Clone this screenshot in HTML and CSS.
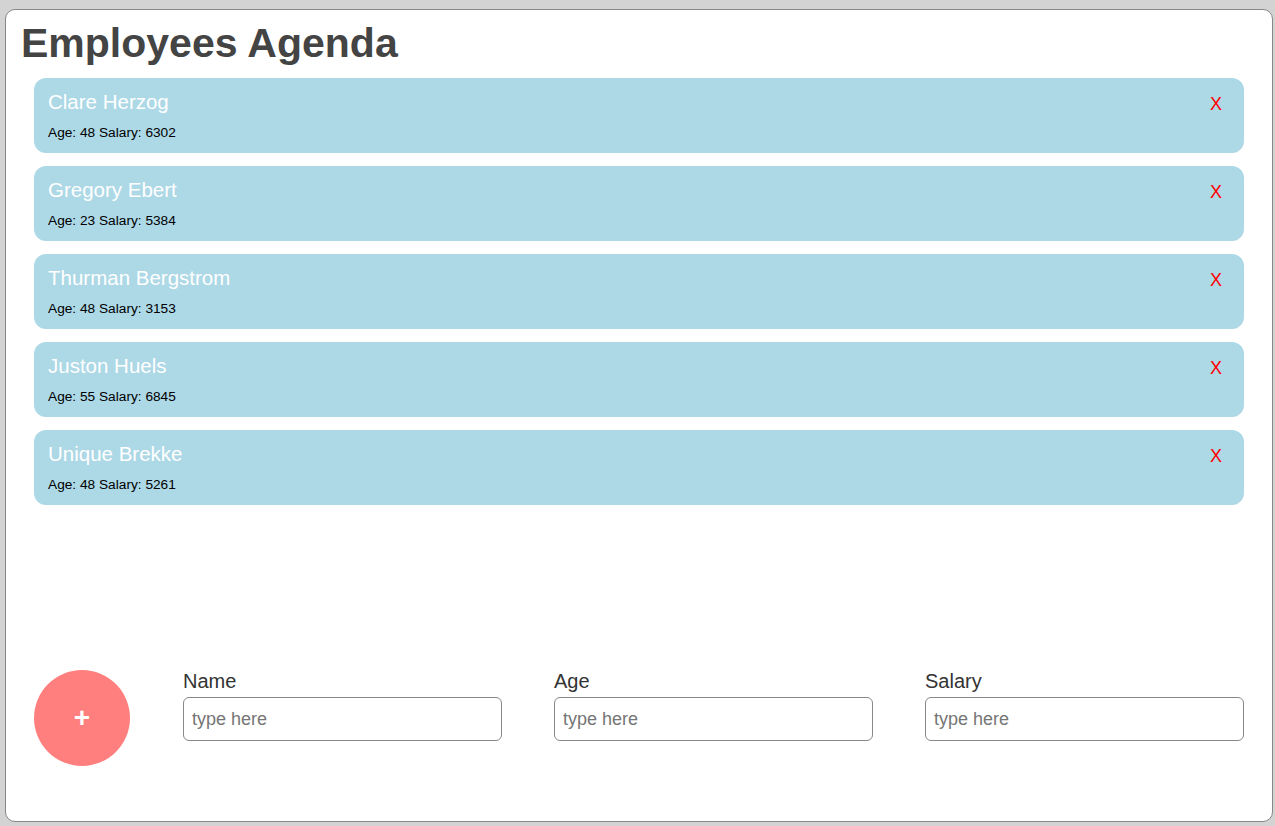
FILE: index.html
```html
<!DOCTYPE html>
<html lang="en">
<head>
<meta charset="utf-8">
<title>Employees Agenda</title>
<link rel="stylesheet" href="styles.css">
</head>
<body>
<div class="panel">
  <h1 class="title">Employees Agenda</h1>
  <ul class="list">
    <li class="card">
      <div class="info"><div class="name">Clare Herzog</div><div class="meta">Age: 48 Salary: 6302</div></div>
      <span class="remove">X</span>
    </li>
    <li class="card">
      <div class="info"><div class="name">Gregory Ebert</div><div class="meta">Age: 23 Salary: 5384</div></div>
      <span class="remove">X</span>
    </li>
    <li class="card">
      <div class="info"><div class="name">Thurman Bergstrom</div><div class="meta">Age: 48 Salary: 3153</div></div>
      <span class="remove">X</span>
    </li>
    <li class="card">
      <div class="info"><div class="name">Juston Huels</div><div class="meta">Age: 55 Salary: 6845</div></div>
      <span class="remove">X</span>
    </li>
    <li class="card">
      <div class="info"><div class="name">Unique Brekke</div><div class="meta">Age: 48 Salary: 5261</div></div>
      <span class="remove">X</span>
    </li>
  </ul>
  <form class="form">
    <button type="button" class="add">+</button>
    <label class="field"><span class="label">Name</span><input class="input" type="text" placeholder="type here"></label>
    <label class="field"><span class="label">Age</span><input class="input" type="text" placeholder="type here"></label>
    <label class="field"><span class="label">Salary</span><input class="input" type="text" placeholder="type here"></label>
  </form>
</div>
</body>
</html>
```
FILE: styles.css
```css
html, body {
  height: 100%;
}
body {
  margin: 0;
  padding: 9px 2px 4px 5px;
  box-sizing: border-box;
  background: #d3d3d3;
  font-family: "Liberation Sans", Arial, sans-serif;
}
.panel {
  height: 100%;
  box-sizing: border-box;
  background: #fff;
  border: 1px solid #888;
  border-radius: 10px;
  display: flex;
  flex-direction: column;
  padding: 10px 0 55px 0;
}
.title {
  margin: 0 0 12px 15px;
  font-size: 41px;
  line-height: 46px;
  font-weight: bold;
  color: #444;
}
.list {
  list-style: none;
  margin: 0;
  padding: 0 28px;
  display: flex;
  flex-direction: column;
  gap: 13px;
}
.card {
  background: #add8e6;
  border-radius: 12px;
  height: 75px;
  box-sizing: border-box;
  padding: 12px 22px 0 14px;
  display: flex;
  justify-content: space-between;
  align-items: flex-start;
}
.name {
  color: #fff;
  font-size: 20.5px;
  line-height: 23px;
}
.meta {
  margin-top: 12px;
  font-size: 13.7px;
  line-height: 15px;
  color: #000;
}
.remove {
  color: #f00;
  font-size: 18px;
  line-height: 21px;
  margin-top: 4px;
}
.form {
  margin-top: auto;
  padding: 0 28px;
  display: flex;
  align-items: flex-start;
  gap: 52px;
}
.add {
  width: 96px;
  height: 96px;
  flex: none;
  margin-right: 1px;
  border: none;
  border-radius: 50%;
  background: #ff7f7f;
  color: #fff;
  font-family: "Liberation Sans", Arial, sans-serif;
  font-size: 28px;
  font-weight: bold;
  padding: 0;
}
.field {
  flex: 1;
  display: flex;
  flex-direction: column;
  gap: 4px;
}
.label {
  font-size: 20px;
  line-height: 23px;
  color: #333;
}
.input {
  height: 44px;
  box-sizing: border-box;
  border: 1px solid #888;
  border-radius: 6px;
  padding: 0 8px;
  font-family: "Liberation Sans", Arial, sans-serif;
  font-size: 18px;
  color: #333;
  background: #fff;
}
.input::placeholder {
  color: #757575;
}
```
